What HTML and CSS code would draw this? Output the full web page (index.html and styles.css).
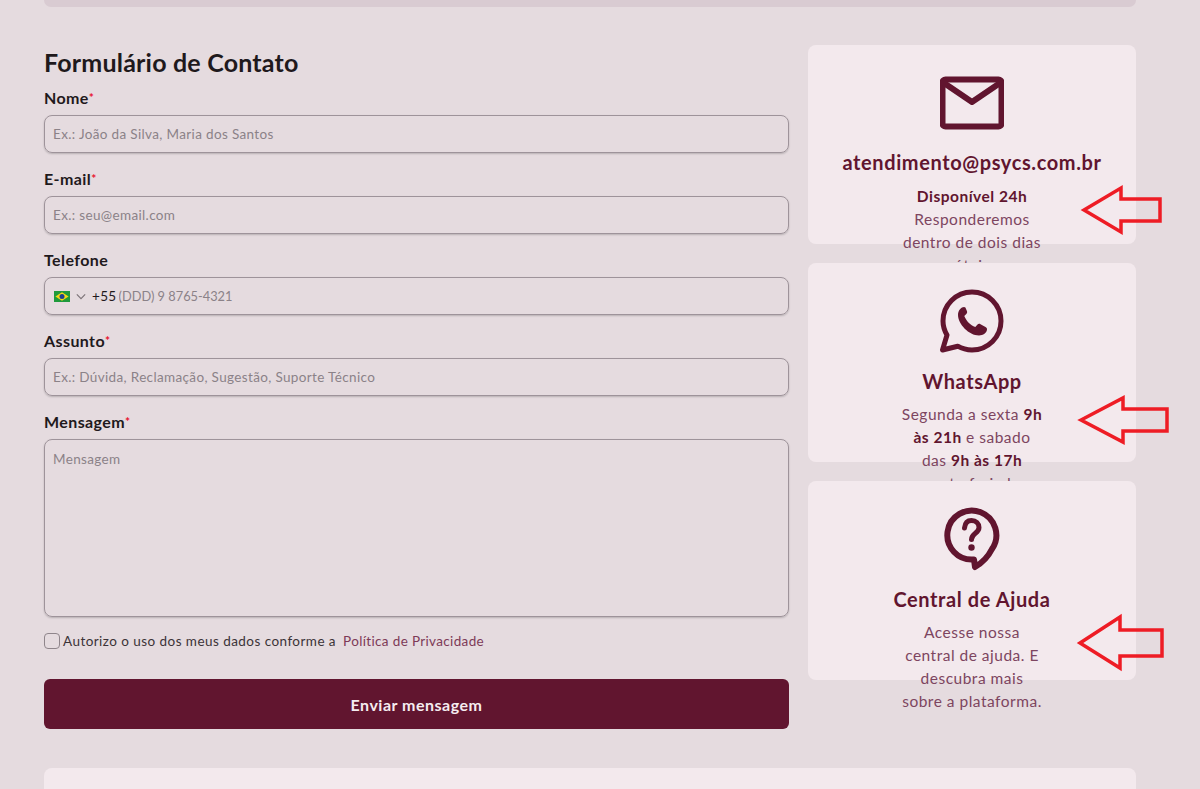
FILE: index.html
```html
<!DOCTYPE html>
<html lang="pt-BR">
<head>
  <meta charset="UTF-8">
  <meta name="viewport" content="width=device-width, initial-scale=1.0">
  <title>Contato</title>
  <link rel="stylesheet" href="styles.css">
</head>
<body>

<div class="page">
  <div class="top-bar"></div>

  <section class="contact">
    <form class="contact-form">
      <h2>Formulário de Contato</h2>

      <div class="field">
        <label>Nome<span class="req">*</span></label>
        <input type="text" placeholder="Ex.: João da Silva, Maria dos Santos">
      </div>
      <div class="field">
        <label>E-mail<span class="req">*</span></label>
        <input type="text" placeholder="Ex.: seu@email.com">
      </div>
      <div class="field">
        <label>Telefone</label>
        <div class="phone">
          <svg class="flag" viewBox="0 0 16 11">
            <rect width="16" height="11" fill="#1f9a3c"/>
            <polygon points="8,1.2 14.6,5.5 8,9.8 1.4,5.5" fill="#f6d916"/>
            <circle cx="8" cy="5.5" r="2.5" fill="#1c3f8f"/>
          </svg>
          <svg class="chevron" viewBox="0 0 12 8"><path d="M1 1.5 6 6.5 11 1.5"/></svg>
          <span class="ddi">+55</span>
          <input type="text" placeholder="(DDD) 9 8765-4321">
        </div>
      </div>
      <div class="field">
        <label>Assunto<span class="req">*</span></label>
        <input type="text" placeholder="Ex.: Dúvida, Reclamação, Sugestão, Suporte Técnico">
      </div>
      <div class="field">
        <label>Mensagem<span class="req">*</span></label>
        <textarea placeholder="Mensagem"></textarea>
      </div>

      <label class="consent">
        <input type="checkbox">
        <span>Autorizo o uso dos meus dados conforme a</span>
        <a href="#">Política de Privacidade</a>
      </label>

      <button type="button" class="submit">Enviar mensagem</button>
    </form>

    <aside class="channels">
      <div class="channel">
        <svg class="icon" viewBox="0 0 64 64">
          <rect x="2.500" y="8.500" width="59" height="47" rx="3" class="line"/>
          <path d="M4 12 32 31 60 12" class="line"/>
        </svg>
        <h3 class="email">atendimento@psycs.com.br</h3>
        <p><b>Disponível 24h</b><br>Responderemos<br>dentro de dois dias<br>úteis</p>
      </div>

      <div class="channel">
        <svg class="icon" viewBox="0 0 64 64">
          <path d="M2.500 61 7 46C4.300 41.500 3 37 3 32 3 16 16 3 32 3s29 13 29 29-13 29-29 29c-5 0-10-1.300-14.300-3.800Z" class="line thin"/>
          <path d="M24 18c-2.500 0-6 3-6 8 0 9 11 20.500 21 20.500 4 0 8-3 8-6 0-1.500-.5-2-1.500-2.500l-5-2.800c-1.300-.7-2.300-.4-3.200.6l-2 2.300c-5-2-9-6-11-11l2-2c1-1 1-2 .6-3l-1.500-3.500c-.4-.4-.8-.6-1.400-.6Z" class="solid"/>
        </svg>
        <h3>WhatsApp</h3>
        <p>Segunda a sexta <b>9h</b><br><b>às 21h</b> e sabado<br>das <b>9h às 17h</b><br>exceto feriados</p>
      </div>

      <div class="channel">
        <svg class="icon" viewBox="0 0 64 64">
          <path d="M34 52.500A24.500 24.500 0 1 1 52 42C48 50 42 56 35 60Z" class="line"/>
          <path d="M24.500 21C25 16 27.500 13.500 31.500 13.500c4.500 0 7.500 3 7.500 7 0 6-7.500 5.500-7.500 12" class="line qmark"/>
          <circle cx="31.500" cy="40.500" r="3.200" class="solid"/>
        </svg>
        <h3>Central de Ajuda</h3>
        <p>Acesse nossa<br>central de ajuda. E<br>descubra mais<br>sobre a plataforma.</p>
      </div>
    </aside>
  </section>

  <div class="bottom-card"></div>
</div>

<!-- setas de anotacao por cima da pagina -->
<svg class="arrows" viewBox="0 0 1200 789">
  <polygon points="1084,210 1121,188 1121,199 1160,199 1160,221 1121,221 1121,232"/>
  <polygon points="1081,420 1123,398 1123,409 1167,409 1167,431 1123,431 1123,442"/>
  <polygon points="1080,643 1120,617 1120,630 1162,630 1162,656 1120,656 1120,668"/>
</svg>

</body>
</html>
```

FILE: styles.css
```css
/* base */
html, body {
  margin: 0;
  padding: 0;
  height: 789px;
  overflow: hidden;
}
body {
  font-family: 'Lato', 'Noto Sans', sans-serif;
  background-color: #e5dbdf;
  color: #1f191c;
}
.page {
  padding: 0 64px 0 44px;
}
.top-bar {
  height: 7px;
  background-color: #d9cbd2;
  border-radius: 0 0 8px 8px;
}
.contact {
  display: grid;
  grid-template-columns: 745px 328px;
  gap: 19px;
  margin-top: 38px;
}

/* formulario */
.contact-form h2 {
  margin: 0;
  height: 42px;
  font-size: 25px;
  line-height: 35px;
  font-weight: 700;
  letter-spacing: 0.2px;
}
.field {
  margin-bottom: 15px;
}
.field label {
  display: block;
  height: 28px;
  font-size: 16px;
  line-height: 22px;
  font-weight: 700;
  letter-spacing: 0.4px;
}
.req {
  color: #e8112d;
  font-size: 12px;
  vertical-align: 2px;
}
.field input,
.field textarea,
.phone {
  display: block;
  box-sizing: border-box;
  width: 100%;
  height: 38px;
  padding: 0 8px;
  background-color: transparent;
  border: 1px solid #9e939a;
  border-radius: 8px;
  box-shadow: 0 1px 2px rgba(0, 0, 0, 0.2);
  font-family: inherit;
  font-size: 13.5px;
  letter-spacing: 0.35px;
  color: #1f191c;
  outline: none;
}
.field textarea {
  height: 178px;
  padding-top: 11px;
  resize: none;
}
input::placeholder,
textarea::placeholder {
  color: #8b8288;
  opacity: 1;
}
.phone {
  display: flex;
  align-items: center;
  padding-left: 9px;
}
.field .phone input {
  flex: 1;
  height: 36px;
  padding: 0 0 0 2px;
  border: none;
  box-shadow: none;
  font-size: 12.8px;
  letter-spacing: 0;
}
.flag {
  width: 16px;
  height: 11px;
  margin-right: 6px;
}
.chevron {
  width: 10px;
  height: 7px;
  margin-right: 6px;
  fill: none;
  stroke: #7d7479;
  stroke-width: 1.4;
}
.ddi {
  font-size: 13.5px;
  letter-spacing: 0.35px;
}
.consent {
  display: flex;
  align-items: center;
  margin-top: -1px;
  height: 20px;
  font-size: 13.5px;
  letter-spacing: 0.45px;
  color: #3b3337;
}
.consent input {
  appearance: none;
  box-sizing: border-box;
  width: 16px;
  height: 16px;
  margin: 0 3px 0 0;
  border: 1px solid #8f858b;
  border-radius: 4px;
}
.consent a {
  margin-left: 7px;
  color: #7d3a57;
  letter-spacing: 0.35px;
  text-decoration: none;
}
.submit {
  display: block;
  width: 100%;
  height: 50px;
  margin-top: 28px;
  border: none;
  border-radius: 6px;
  background-color: #61152f;
  color: #f5ecef;
  font-family: inherit;
  font-size: 16px;
  font-weight: 700;
  letter-spacing: 0.5px;
}

/* cards da direita */
.channels {
  display: flex;
  flex-direction: column;
  gap: 19px;
}
.channel {
  position: relative;
  box-sizing: border-box;
  height: 199px;
  padding-top: 26px;
  background-color: #f3e9ed;
  border-radius: 8px;
  text-align: center;
  color: #61152f;
}
.icon {
  display: block;
  width: 64px;
  height: 64px;
  margin: 0 auto;
}
.line {
  fill: none;
  stroke: #61152f;
  stroke-width: 6;
  stroke-linejoin: round;
}
.thin {
  stroke-width: 5;
}
.qmark {
  stroke-width: 5;
  stroke-linecap: round;
}
.solid {
  fill: #61152f;
}
.channel h3 {
  margin: 16px 0 0;
  height: 24px;
  font-size: 20px;
  line-height: 24px;
  font-weight: 700;
  letter-spacing: 0.6px;
}
.channel h3.email {
  line-height: 22px;
}
.channel p {
  margin: 10px 0 0;
  font-size: 15.5px;
  line-height: 23px;
  letter-spacing: 0.5px;
  color: #7d4560;
}
.channel p b {
  color: #61152f;
}
.bottom-card {
  height: 60px;
  margin-top: 39px;
  background-color: #f3e9ed;
  border-radius: 8px 8px 0 0;
}
.arrows {
  position: absolute;
  top: 0;
  left: 0;
  width: 1200px;
  height: 789px;
  fill: none;
  stroke: #ee1c25;
  stroke-width: 3.500;
  pointer-events: none;
}
```
